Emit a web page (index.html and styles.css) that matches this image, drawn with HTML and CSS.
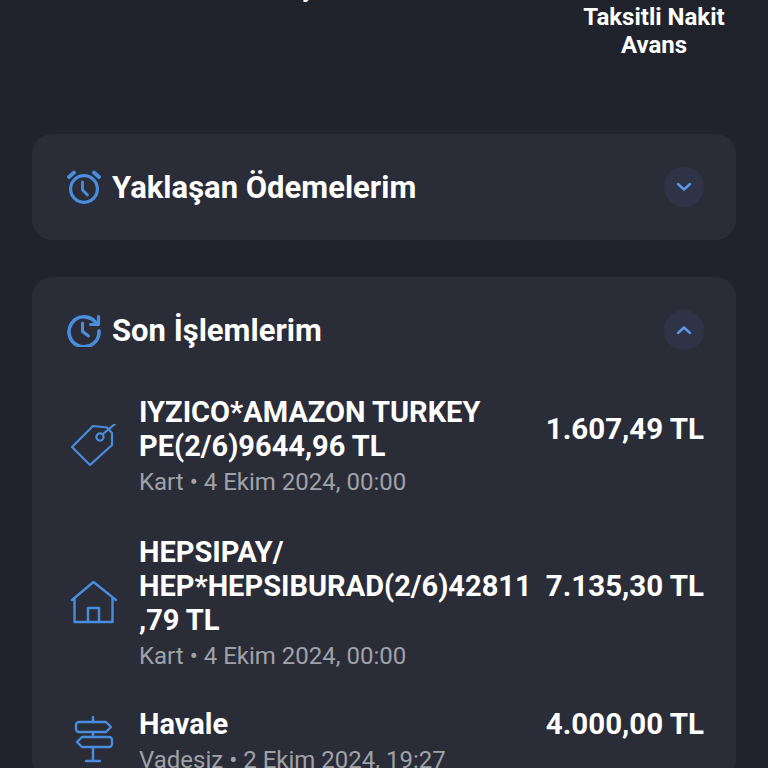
FILE: index.html
```html
<!DOCTYPE html>
<html lang="tr">
<head>
<meta charset="utf-8"/>
<title>Son İşlemlerim</title>
<link rel="stylesheet" href="styles.css">
</head>
<body>

<div class="shortcuts">
  <div class="shortcut"></div>
  <div class="shortcut">Pay</div>
  <div class="shortcut"></div>
  <div class="shortcut">&nbsp;<br>Taksitli Nakit Avans</div>
</div>

<section class="card card-closed">
  <div class="card-head">
    <svg class="head-icon" viewBox="0 0 34 34" fill="none" stroke="#4a8ddc" stroke-width="3.2" stroke-linecap="round" stroke-linejoin="round">
      <circle cx="17" cy="19" r="13.4"/>
      <path d="M15.500 12v8l5 5" stroke-width="2.800"/>
      <path d="M2 7 7 2.500M32 7l-5-4.500" stroke-width="3.800"/>
    </svg>
    <h2>Yaklaşan Ödemelerim</h2>
    <span class="toggle">
      <svg viewBox="0 0 16 10" fill="none" stroke="#5f97e6" stroke-width="2.4" stroke-linecap="round" stroke-linejoin="round"><path d="M2 2l6 5.500L14 2"/></svg>
    </span>
  </div>
</section>

<section class="card">
  <div class="card-head card-head-open">
    <svg class="head-icon" viewBox="0 0 34 34" fill="none" stroke="#4a8ddc" stroke-width="3.600" stroke-linecap="round" stroke-linejoin="round">
      <path d="M29.500 10.500A15 15 0 1 0 32 18"/>
      <path d="M15.500 10v8.500l6 4.500" stroke-width="3"/>
      <path d="M31.500 3.500v8h-8" stroke-width="3.200"/>
    </svg>
    <h2>Son İşlemlerim</h2>
    <span class="toggle">
      <svg viewBox="0 0 16 10" fill="none" stroke="#5f97e6" stroke-width="2.4" stroke-linecap="round" stroke-linejoin="round"><path d="M2 8l6-5.500L14 8"/></svg>
    </span>
  </div>

  <div class="item">
    <svg class="item-icon" viewBox="0 0 48 48" fill="none" stroke="#4a8ddc" stroke-width="2.200" stroke-linecap="round" stroke-linejoin="round">
      <path d="M2 23 23 2 37 3.500 42 9V21L20 41Z"/>
      <circle cx="30" cy="13" r="3.600"/>
      <path d="M33 10 45 0"/>
    </svg>
    <div class="item-title">IYZICO*AMAZON TURKEY<br>PE(2/6)9644,96 TL</div>
    <div class="item-amount">1.607,49 TL</div>
    <div class="item-meta">Kart • 4 Ekim 2024, 00:00</div>
  </div>

  <div class="item item-tall">
    <svg class="item-icon" viewBox="0 0 48 48" fill="none" stroke="#4a8ddc" stroke-width="2.400" stroke-linecap="round" stroke-linejoin="round">
      <path d="M2 19 23.500 1 46 19"/>
      <path d="M4.500 17.500V41h38V17.500"/>
      <path d="M18 41V27h11v14"/>
    </svg>
    <div class="item-title">HEPSIPAY/<br>HEP*HEPSIBURAD(2/6)42811<br>,79 TL</div>
    <div class="item-amount">7.135,30 TL</div>
    <div class="item-meta">Kart • 4 Ekim 2024, 00:00</div>
  </div>

  <div class="item">
    <svg class="item-icon item-icon-up" viewBox="0 0 48 48" fill="none" stroke="#4a8ddc" stroke-width="2.400" stroke-linecap="round" stroke-linejoin="round">
      <path d="M23 1v5M23 16v5M23 31v14M16 45h14"/>
      <path d="M9 6h27l5 5-5 5H9a3 3 0 0 1-3-3V9a3 3 0 0 1 3-3Z"/>
      <path d="M39 21H12l-5 5 5 5h27a3 3 0 0 0 3-3v-4a3 3 0 0 0-3-3Z"/>
    </svg>
    <div class="item-title">Havale</div>
    <div class="item-amount">4.000,00 TL</div>
    <div class="item-meta">Vadesiz • 2 Ekim 2024, 19:27</div>
  </div>
</section>

</body>
</html>
```

FILE: styles.css
```css
html, body {
  height: 100%;
  overflow: hidden;
}

body {
  margin: 0;
  background-color: #20222c;
  color: #fff;
  font-family: Roboto, "Noto Sans", sans-serif;
}

.shortcuts {
  display: grid;
  grid-template-columns: repeat(4, 164px);
  column-gap: 16px;
  height: 134px;
  margin-top: -25px;
  padding: 0 32px;
  font-size: 24px;
  font-weight: 700;
  line-height: 28px;
  text-align: center;
}

.card {
  margin: 25px 32px 37px;
  padding: 0 32px 0 35px;
  background-color: #2a2c37;
  border-radius: 20px;
}

.card-closed {
  height: 106px;
}

.card-head {
  display: flex;
  align-items: center;
  height: 106px;
}

.card-head-open {
  margin-bottom: 12px;
}

.head-icon {
  width: 34px;
  height: 34px;
  margin-right: 11px;
  flex: none;
}

.card-head h2 {
  flex: 1;
  margin: 0;
  padding-top: 2px;
  font-size: 31px;
  font-weight: 700;
  line-height: 36px;
}

.toggle {
  display: flex;
  align-items: center;
  justify-content: center;
  width: 40px;
  height: 40px;
  background-color: #2e3446;
  border-radius: 50%;
}

.toggle svg {
  width: 16px;
  height: 10px;
}

.item {
  display: grid;
  grid-template-columns: 48px minmax(0, 1fr) auto;
  align-items: center;
  column-gap: 22px;
  margin: 0 0 34px 3px;
}

.item-tall {
  margin-bottom: 32px;
}

.item-icon {
  grid-row: 1 / 3;
  width: 48px;
  height: 48px;
}

.item-icon-up {
  margin-bottom: 6px;
}

.item-title {
  font-size: 29px;
  font-weight: 700;
  line-height: 34px;
  white-space: nowrap;
  margin-left: -1px;
}

.item-amount {
  font-size: 29.5px;
  font-weight: 700;
  line-height: 34px;
  white-space: nowrap;
}

.item-meta {
  grid-column: 2 / 4;
  margin-left: -1px;
  color: #a0a2a9;
  font-size: 24px;
  line-height: 38px;
}
```
